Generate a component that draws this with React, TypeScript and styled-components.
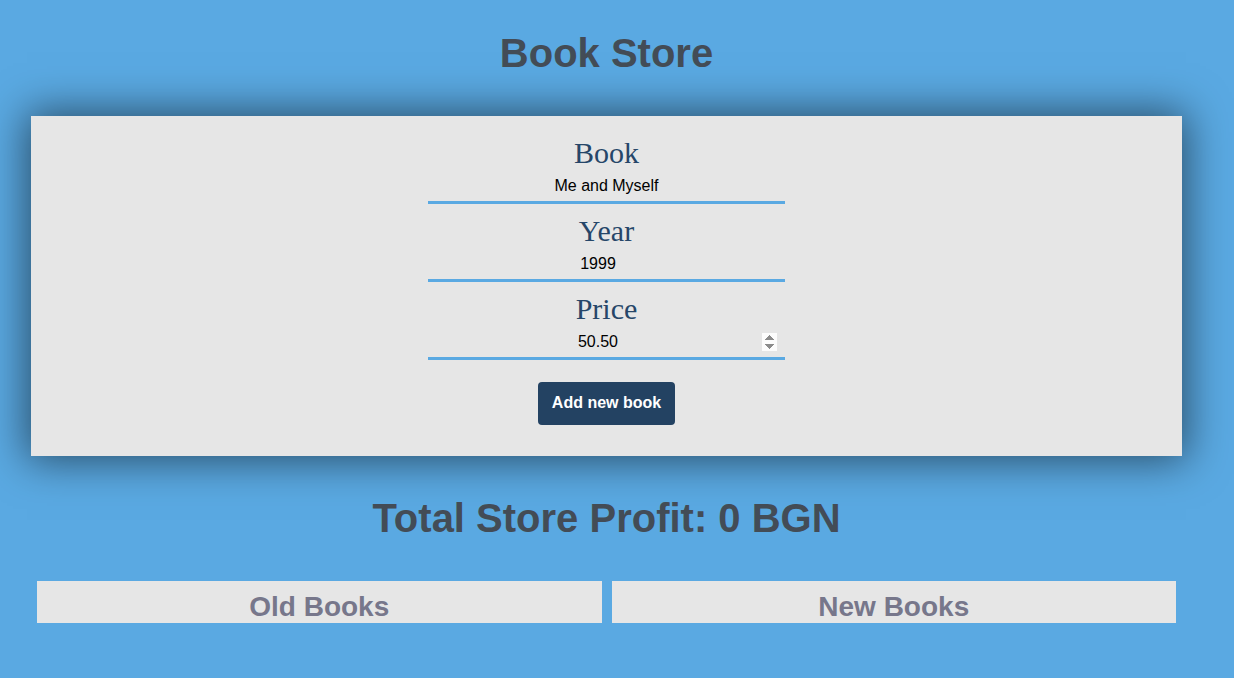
import * as React from "react";
import styled, { createGlobalStyle } from "styled-components";

const GlobalStyle = createGlobalStyle`
  html, body {
    margin: 0;
    padding: 0;
    background: #5aa9e2;
  }
  body {
    font-family: "Liberation Sans", Arial, sans-serif;
  }
`;

const Page = styled.div`
  width: 1213px;
  padding-top: 30px;
  padding-bottom: 40px;
`;

const Title = styled.h1`
  margin: 0;
  font-size: 40px;
  font-weight: bold;
  line-height: 46px;
  text-align: center;
  color: #434c56;
`;

const Card = styled.form`
  margin: 40px 31px 0 31px;
  padding: 20px 0 31px;
  background: #e6e6e6;
  box-shadow: 0 0 40px 4px rgba(0, 0, 0, 0.55);
  display: flex;
  flex-direction: column;
  align-items: center;
`;

const Field = styled.div<{ last?: boolean }>`
  width: 357px;
  display: flex;
  flex-direction: column;
  margin-bottom: ${({ last }) => (last ? "22px" : "10px")};
`;

const Label = styled.label`
  font-family: "Liberation Serif", "Times New Roman", serif;
  font-size: 30px;
  line-height: 34px;
  color: #264669;
  text-align: center;
`;

const Input = styled.input<{ showSpin?: boolean }>`
  display: block;
  width: 100%;
  box-sizing: border-box;
  border: none;
  border-bottom: 3px solid #5aa9e2;
  background: transparent;
  outline: none;
  padding: 7px 6px 6px;
  font-family: "Liberation Sans", Arial, sans-serif;
  font-size: 16px;
  line-height: 18px;
  color: #000;
  text-align: center;

  &[type="number"] {
    padding-right: 8px;
  }

  &::-webkit-inner-spin-button {
    opacity: ${({ showSpin }) => (showSpin ? 1 : 0)};
  }
`;

const AddButton = styled.button`
  height: 43px;
  box-sizing: border-box;
  padding: 10px 14px 12px;
  line-height: 21px;
  border: none;
  border-radius: 4px;
  background: #234262;
  color: #fff;
  font-family: "Liberation Sans", Arial, sans-serif;
  font-size: 16px;
  font-weight: bold;
  cursor: pointer;
`;

const Profit = styled.h2`
  margin: 39px 0 0;
  font-size: 40px;
  font-weight: bold;
  line-height: 46px;
  text-align: center;
  color: #434c56;
`;

const Shelves = styled.div`
  display: flex;
  gap: 10px;
  padding: 0 37px 0 37px;
  margin-top: 40px;
`;

const Shelf = styled.section`
  flex: 1;
  height: 42px;
  box-sizing: border-box;
  padding-top: 10px;
  background: #e6e6e6;
  overflow: hidden;
`;

const ShelfTitle = styled.h3`
  margin: 0;
  font-size: 28px;
  line-height: 32px;
  font-weight: bold;
  text-align: center;
  color: #77778b;
`;

export default function App() {
  const [book, setBook] = React.useState("Me and Myself");
  const [year, setYear] = React.useState("1999");
  const [price, setPrice] = React.useState("50.50");

  return (
    <>
      <GlobalStyle />
      <Page>
        <Title>Book Store</Title>
        <Card onSubmit={(e) => e.preventDefault()}>
          <Field>
            <Label htmlFor="book">Book</Label>
            <Input id="book" type="text" value={book} onChange={(e) => setBook(e.target.value)} />
          </Field>
          <Field>
            <Label htmlFor="year">Year</Label>
            <Input id="year" type="number" value={year} onChange={(e) => setYear(e.target.value)} />
          </Field>
          <Field last>
            <Label htmlFor="price">Price</Label>
            <Input
              id="price"
              type="number"
              step="0.01"
              showSpin
              value={price}
              onChange={(e) => setPrice(e.target.value)}
            />
          </Field>
          <AddButton type="submit">Add new book</AddButton>
        </Card>
        <Profit>Total Store Profit: 0 BGN</Profit>
        <Shelves>
          <Shelf>
            <ShelfTitle>Old Books</ShelfTitle>
          </Shelf>
          <Shelf>
            <ShelfTitle>New Books</ShelfTitle>
          </Shelf>
        </Shelves>
      </Page>
    </>
  );
}
